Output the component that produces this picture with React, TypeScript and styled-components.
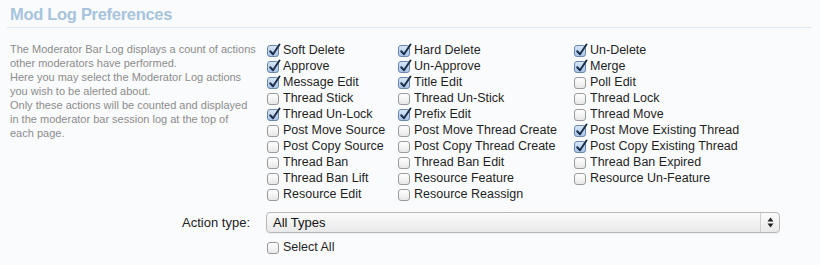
import React from 'react';
import styled, { createGlobalStyle } from 'styled-components';

const GlobalStyle = createGlobalStyle`
  body {
    margin: 0;
    background: #fafbfd;
    font-family: "Liberation Sans", Arial, sans-serif;
  }
`;

const Page = styled.div`
  width: 820px;
  height: 265px;
  padding: 4px 8px 0 7px;
  box-sizing: border-box;
`;

const Heading = styled.h3`
  margin: 0;
  padding: 0 0 3px 3px;
  font-size: 16.5px;
  font-weight: bold;
  letter-spacing: -0.3px;
  color: #a7c4dc;
  border-bottom: 1px solid #dde7f0;
  line-height: 20px;
`;

const Unit = styled.div`
  display: grid;
  grid-template-columns: 243px 1fr;
  column-gap: 17px;
  align-items: start;
`;

const Description = styled.p`
  margin: 14px 0 0 3px;
  font-size: 11px;
  line-height: 14px;
  color: #8c8c8c;
  white-space: nowrap;
`;

const Options = styled.ul`
  list-style: none;
  margin: 14px 0 0 0;
  padding: 0;
  display: grid;
  grid-template-columns: 131px 176px 1fr;
  grid-auto-rows: 16px;
`;

const Option = styled.li`
  display: flex;
  align-items: center;
  gap: 4px;
  font-size: 12.5px;
  color: #1f1f1f;
  white-space: nowrap;
`;

const Box = styled.span<{ $checked: boolean }>`
  width: 12px;
  height: 12px;
  box-sizing: border-box;
  border: 1px solid ${p => (p.$checked ? '#6a86a8' : '#9a9a9a')};
  border-radius: 3px;
  background: ${p =>
    p.$checked
      ? 'linear-gradient(#d7e6f5, #a9c6e6)'
      : 'linear-gradient(#ffffff, #e8e8e8)'};
  position: relative;
  flex: none;
  margin-top: 1px;

  svg {
    position: absolute;
    left: 0px;
    top: -3px;
  }
`;

const FormRow = styled.div`
  display: grid;
  grid-template-columns: 243px 1fr;
  column-gap: 16px;
  align-items: center;
  margin-top: 10px;
`;

const Label = styled.label`
  text-align: right;
  font-size: 13px;
  color: #222;
`;

const Select = styled.div`
  width: 514px;
  height: 21px;
  box-sizing: border-box;
  border: 1px solid #b8b8b8;
  border-radius: 4px;
  background: linear-gradient(#fbfbfb, #e9e9e9);
  display: flex;
  align-items: center;
  font-size: 13px;
  color: #111;
  box-shadow: 0 1px 1px rgba(0, 0, 0, 0.06);
`;

const SelectText = styled.span`
  flex: 1;
  padding-left: 6px;
`;

const Arrows = styled.span`
  width: 18px;
  height: 100%;
  border-left: 1px solid #cfcfcf;
  display: flex;
  align-items: center;
  justify-content: center;
`;

const SelectAllRow = styled.div`
  display: grid;
  grid-template-columns: 243px 1fr;
  column-gap: 17px;
  margin-top: 7px;
`;

const Check = () => (
  <svg width="13" height="14" viewBox="0 0 13 14">
    <path d="M2.2 8.2 L5 11.2 L11.5 1.5" fill="none" stroke="#1d2f4a" strokeWidth="2" strokeLinecap="round" strokeLinejoin="round" />
  </svg>
);

const CheckItem = ({ label, checked }: { label: string; checked: boolean }) => (
  <Option>
    <Box $checked={checked}>{checked && <Check />}</Box>
    {label}
  </Option>
);

const actions: [string, boolean][] = [
  ['Soft Delete', true], ['Hard Delete', true], ['Un-Delete', true],
  ['Approve', true], ['Un-Approve', true], ['Merge', true],
  ['Message Edit', true], ['Title Edit', true], ['Poll Edit', false],
  ['Thread Stick', false], ['Thread Un-Stick', false], ['Thread Lock', false],
  ['Thread Un-Lock', true], ['Prefix Edit', true], ['Thread Move', false],
  ['Post Move Source', false], ['Post Move Thread Create', false], ['Post Move Existing Thread', true],
  ['Post Copy Source', false], ['Post Copy Thread Create', false], ['Post Copy Existing Thread', true],
  ['Thread Ban', false], ['Thread Ban Edit', false], ['Thread Ban Expired', false],
  ['Thread Ban Lift', false], ['Resource Feature', false], ['Resource Un-Feature', false],
  ['Resource Edit', false], ['Resource Reassign', false],
];

export default function App() {
  return (
    <Page>
      <GlobalStyle />
      <Heading>Mod Log Preferences</Heading>
      <Unit>
        <Description>
          The Moderator Bar Log displays a count of actions
          <br />
          other moderators have performed.
          <br />
          Here you may select the Moderator Log actions
          <br />
          you wish to be alerted about.
          <br />
          Only these actions will be counted and displayed
          <br />
          in the moderator bar session log at the top of
          <br />
          each page.
        </Description>
        <Options>
          {actions.map(([label, checked]) => (
            <CheckItem key={label} label={label} checked={checked} />
          ))}
        </Options>
      </Unit>
      <FormRow>
        <Label>Action type:</Label>
        <Select>
          <SelectText>All Types</SelectText>
          <Arrows>
            <svg width="7" height="11" viewBox="0 0 7 11">
              <path d="M3.5 0.5 L6.5 4.5 L0.5 4.5 Z M3.5 10.5 L6.5 6.5 L0.5 6.5 Z" fill="#222" />
            </svg>
          </Arrows>
        </Select>
      </FormRow>
      <SelectAllRow>
        <span />
        <Option>
          <Box $checked={false} />
          Select All
        </Option>
      </SelectAllRow>
    </Page>
  );
}
